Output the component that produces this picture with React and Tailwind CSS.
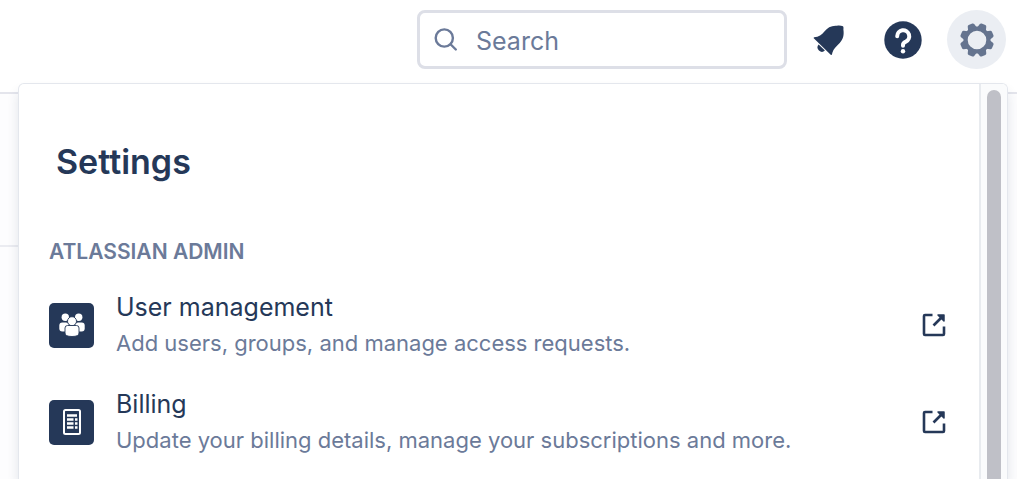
function SearchIcon() {
  return (
    <svg viewBox="0 0 24 24" className="size-6 shrink-0" fill="none" stroke="#6b7a99" strokeWidth="2.4" strokeLinecap="round" aria-hidden="true">
      <circle cx="10.3" cy="10" r="8.600" />
      <path d="M16.800 16.500l5 5" />
    </svg>
  );
}

function BellIcon() {
  return (
    <svg viewBox="0 0 32 32" className="size-8" fill="#253858" aria-hidden="true">
      <path d="M1.200 13.200C5.800 12.900 8.800 10.900 11.400 7.500C14.400 3.500 18.500 1.200 24 1.700C26.500 1.300 28.200 1.700 30 2.300C30.700 3.300 30.500 4.500 30.400 5.500C31.200 11 30.200 15.200 26.700 19C23.400 22.500 20 25 19 30.300C18.800 31.100 18.300 31.200 17.700 30.700L1 14.500C.5 14 .6 13.300 1.200 13.200z" />
      <path d="M5.600 20.500l6.300 6.100a4.400 4.400 0 0 1-6.300-6.100z" />
    </svg>
  );
}

function HelpIcon() {
  return (
    <svg viewBox="0 0 38 38" className="size-[38px]" aria-hidden="true">
      <circle cx="19" cy="19" r="18.700" fill="#253858" />
      <path d="M13.200 15.200a6 6 0 1 1 8.600 5.400c-1.900.8-2.800 1.700-2.800 3.400v.8" fill="none" stroke="#fff" strokeWidth="4" strokeLinecap="round" />
      <circle cx="19" cy="30.300" r="2.200" fill="#fff" />
    </svg>
  );
}

const toothAngles = [22.5, 67.5, 112.5, 157.5, 202.5, 247.5, 292.5, 337.5];

function GearIcon() {
  return (
    <svg viewBox="-17 -17 34 34" className="size-[34px]" fill="#65748f" aria-hidden="true">
      <circle r="11.400" fill="none" stroke="#65748f" strokeWidth="4.200" />
      {toothAngles.map((angle) => (
        <path key={angle} transform={`rotate(${angle})`} d="M-4.600-12L-3.500-15.800Q-3.100-17-2-17H2Q3.100-17 3.500-15.800L4.600-12z" />
      ))}
    </svg>
  );
}

function PeopleIcon() {
  return (
    <svg viewBox="0 0 26 24" className="h-6 w-[26px]" fill="#fff" aria-hidden="true">
      <circle cx="6.300" cy="4.200" r="3.700" />
      <circle cx="19.700" cy="4.200" r="3.700" />
      <rect x="0.300" y="9.500" width="9.500" height="9" rx="3" />
      <rect x="16.200" y="9.500" width="9.500" height="9" rx="3" />
      <circle cx="13" cy="8.200" r="4.500" stroke="#253858" strokeWidth="0.900" />
      <path d="M8.500 12.500h9q2.500 0 2.500 2.500v5q0 3.500-7 3.500t-7-3.500v-5q0-2.500 2.500-2.500z" stroke="#253858" strokeWidth="0.900" />
    </svg>
  );
}

function BillIcon() {
  return (
    <svg viewBox="0 0 18 26" className="h-[26px] w-[18px]" aria-hidden="true">
      <rect x="1" y="1" width="16" height="24" rx="1.500" fill="none" stroke="#fff" strokeWidth="2" />
      <path d="M4 6.500h10M4 10.500h6.500M12 10.500H14.500M4 14.500h6.500M12 14.500H14.500M4 18.500h6.500M12 18.500H14.500" stroke="#fff" strokeWidth="2.600" />
    </svg>
  );
}

function ExternalIcon() {
  return (
    <svg viewBox="0 0 24 24" className="size-6 shrink-0" fill="none" stroke="#253858" strokeWidth="2.600" aria-hidden="true">
      <path d="M10.500 2H3Q2 2 2 3v18q0 1 1 1h18q1 0 1-1v-7.500" />
      <path d="M11.500 12.500L21 3" />
      <path d="M16 2h6v6z" fill="#253858" strokeWidth="1.500" strokeLinejoin="round" />
    </svg>
  );
}

const entries = [
  { title: "User management", text: "Add users, groups, and manage access requests.", Icon: PeopleIcon },
  { title: "Billing", text: "Update your billing details, manage your subscriptions and more.", Icon: BillIcon },
];

function Entry({ title, text, Icon }) {
  return (
    <li>
      <a href="#" className="flex items-center pb-[25px]">
        <span className="flex size-[45px] shrink-0 items-center justify-center rounded-[5px] bg-[#253858]">
          <Icon />
        </span>
        <span className="ml-[22px] flex min-w-0 flex-1 flex-col">
          <span className="text-[25px] leading-9 text-[#253858]">{title}</span>
          <span className="text-[22px] leading-9 text-[#6b7a99]">{text}</span>
        </span>
        <ExternalIcon />
      </a>
    </li>
  );
}

export default function App() {
  return (
    <div className="relative h-screen overflow-hidden bg-[#fdfdfe] font-['Inter','Liberation_Sans',sans-serif]">
      <header className="flex items-center justify-end gap-3 border-b-2 border-[#e4e5ec] bg-white pt-2.5 pr-[11px] pb-[23px]">
        <label className="flex h-[59px] w-[370px] items-center gap-[18px] rounded-lg border-[3px] border-[#dddfe7] bg-white px-3.5">
          <SearchIcon />
          <input type="search" aria-label="Search" placeholder="Search" className="h-full min-w-0 flex-1 bg-transparent pt-0.5 text-[25px] text-[#6b7a99] outline-none placeholder:text-[#6b7a99]" />
        </label>
        <div className="flex gap-[15px]">
          <button type="button" aria-label="Notifications" className="flex size-[59px] items-center justify-center rounded-full">
            <BellIcon />
          </button>
          <button type="button" aria-label="Help" className="flex size-[59px] items-center justify-center rounded-full">
            <HelpIcon />
          </button>
          <button type="button" aria-label="Settings" className="flex size-[59px] items-center justify-center rounded-full bg-[#ebeef3]">
            <GearIcon />
          </button>
        </div>
      </header>
      <div className="mr-10 h-[153px] border-b-2 border-[#ebecf1]" />

      <section aria-labelledby="settings-title" className="absolute top-[83px] right-[9px] bottom-0 left-[18px] flex overflow-hidden rounded-t-md border border-b-0 border-[#e4e7ed] bg-white shadow-[0_8px_12px_rgba(37,56,88,0.12)]">
        <div className="min-w-0 flex-1 pr-[33px] pl-[30px]">
          <h1 id="settings-title" className="pt-14 pl-[7px] text-[34px] leading-[44px] font-semibold text-[#253858]">Settings</h1>
          <h2 className="pt-[54px] text-[21px] leading-7 font-semibold text-[#6b7a99]">ATLASSIAN ADMIN</h2>
          <ul className="pt-[23px]">
            {entries.map((entry) => (
              <Entry key={entry.title} {...entry} />
            ))}
          </ul>
        </div>
        <div className="w-7 shrink-0 border-l-2 border-[#e8ebef] bg-[#fafbfc] px-1.5 pt-1.5">
          <div className="h-full w-3.5 rounded-t-full bg-[#bfc0c7]" />
        </div>
      </section>
    </div>
  );
}
